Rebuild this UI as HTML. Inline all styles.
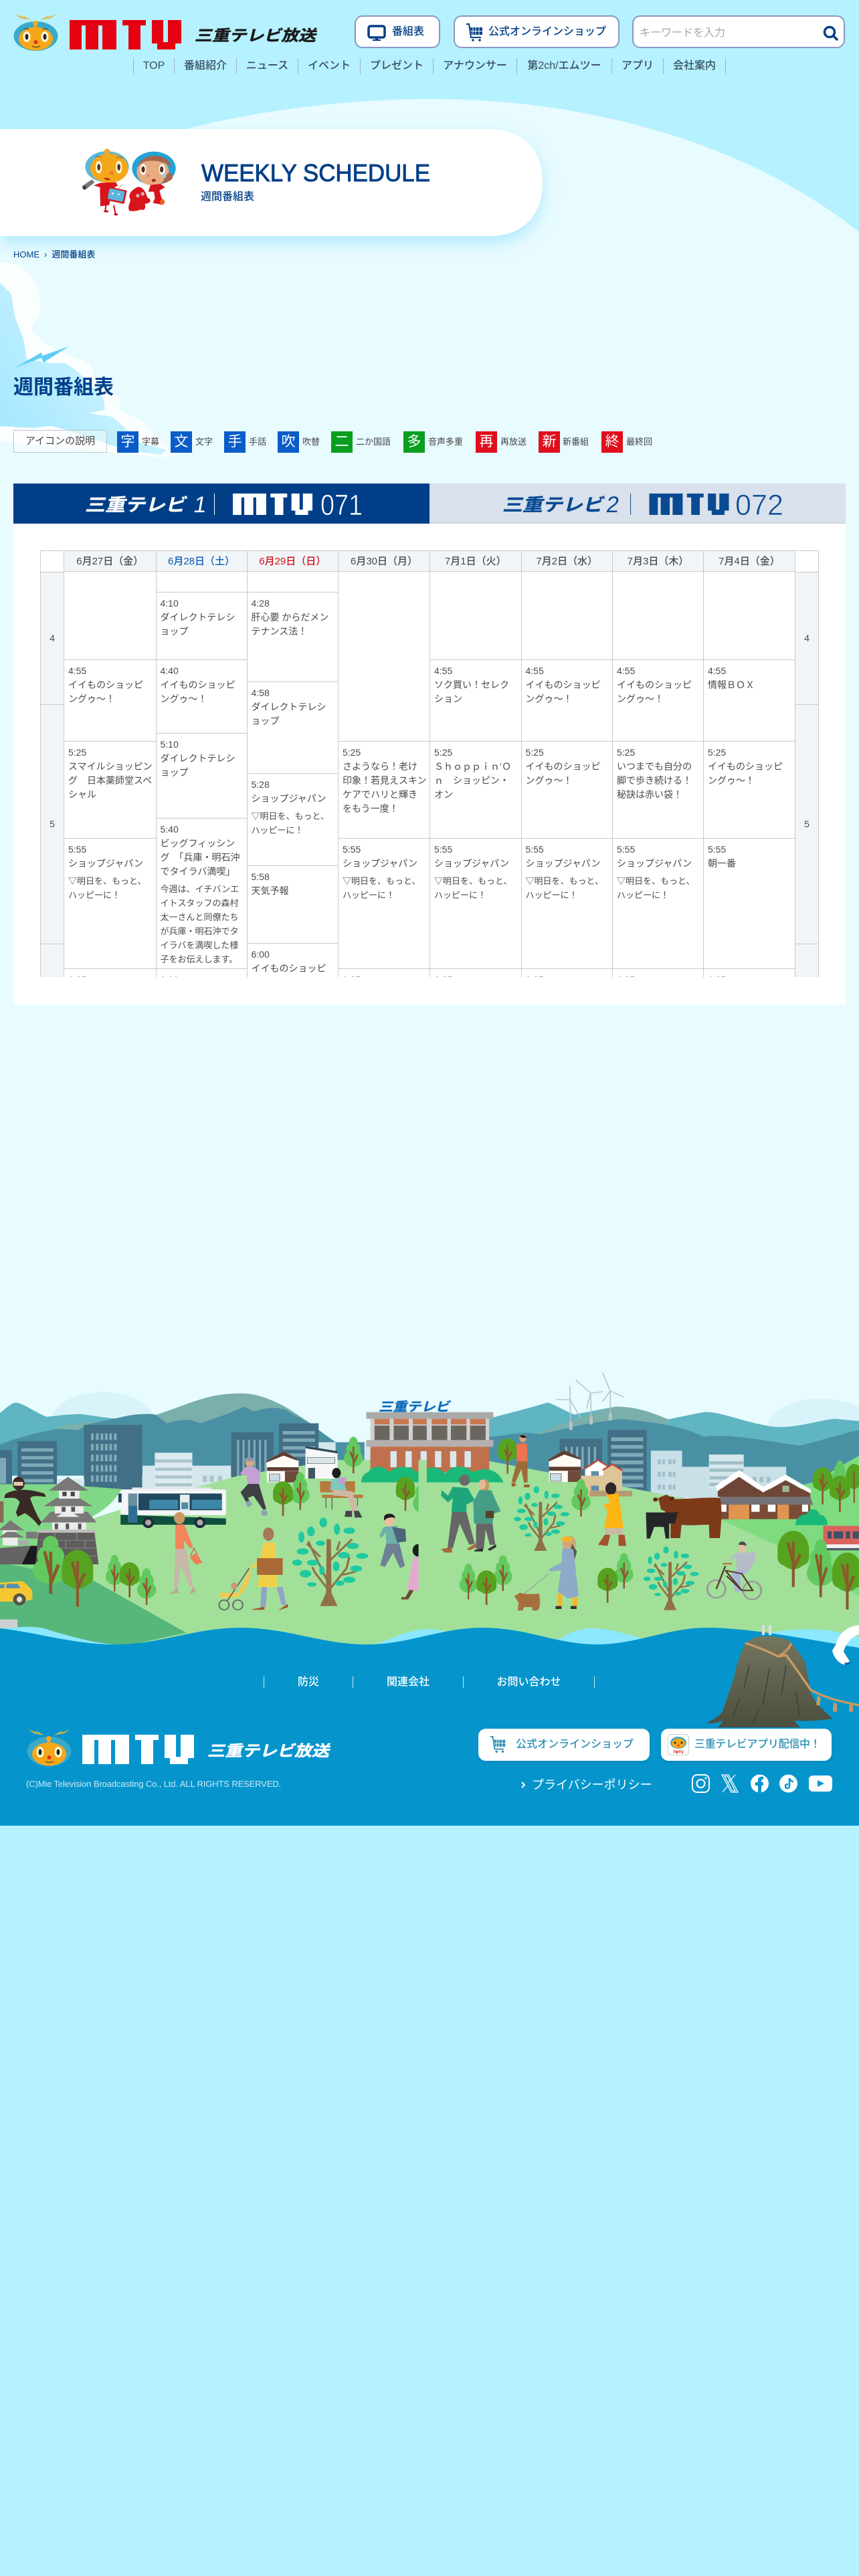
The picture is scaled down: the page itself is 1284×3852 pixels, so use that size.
<!DOCTYPE html>
<html lang="ja"><head><meta charset="utf-8"><title>週間番組表 | 三重テレビ放送</title>
<style>
html,body{margin:0;padding:0}
body{width:1284px;height:3852px;position:relative;overflow:hidden;background:#b5f1ff;font-family:"Liberation Sans","Noto Sans CJK JP",sans-serif;color:#444}
svg text{font-family:"Liberation Sans","Noto Sans CJK JP",sans-serif}
#bg{position:absolute;left:0;top:0}
.t{position:absolute;white-space:nowrap}
.btn{position:absolute;box-sizing:border-box;background:#fff;border:2px solid #8996c2;border-radius:12px;color:#003f85;font-size:16px;line-height:45px;font-weight:500}
.nav{position:absolute;top:87px;height:24px;line-height:24px;text-align:center;font-size:16px;font-weight:500;color:#3a4e5e;border-left:1px solid #9fb3bf;box-sizing:border-box}
.ic{position:absolute;top:645px;width:32px;height:32px;line-height:32px;text-align:center;color:#fff;font-size:21px}
.lb{position:absolute;top:650px;font-size:13px;line-height:22px;color:#444;white-space:nowrap}
.bl{background:#0a5dc8}.gr{background:#0a9e1f}.rd{background:#e00f1d}
#tb{position:absolute;left:60px;top:823px;width:1164px;height:638px;overflow:hidden;background:#fff;font-size:14px;line-height:21px;color:#4a4a4a}
.col{position:absolute;top:0;height:800px;box-sizing:border-box;border-left:1px solid #c6c9cc}
.h{box-sizing:border-box;height:32px;line-height:31px;text-align:center;background:#f1f5f8;font-size:15px;font-weight:500;border-top:1px solid #c6c9cc;border-bottom:1px solid #c6c9cc;white-space:nowrap}
.c{box-sizing:border-box;padding:6px 0 0 6px;border-bottom:1px solid #c6c9cc;white-space:nowrap;overflow:hidden}
.c p{margin:5px 0 0;font-size:13px}
.hr{box-sizing:border-box;background:#f1f5f8;border-bottom:1px solid #c6c9cc;text-align:center;font-size:14px;display:flex;align-items:center;justify-content:center}
.fb{position:absolute;top:2585px;height:48px;background:#fff;border-radius:11px;color:#2a8fb6;font-size:16px;font-weight:500;line-height:48px;box-shadow:0 2px 4px rgba(0,60,100,.15)}
.fn{position:absolute;top:2507px;height:17px;line-height:17px;color:#fff;font-size:16px;font-weight:500;text-align:center;border-left:1px solid #cfeaf5;box-sizing:border-box}
</style></head><body>
<svg id="bg" width="1284" height="3852" viewBox="0 0 1284 3852" xmlns="http://www.w3.org/2000/svg">
<defs>
<linearGradient id="cl" x1="0" x2="1" y1=".8" y2=".15"><stop offset="0" stop-color="#a6e8ff"/><stop offset=".55" stop-color="#c6f1ff"/><stop offset="1" stop-color="#e2f9ff"/></linearGradient>
<linearGradient id="rk" x1="0" x2="0" y1="0" y2="1"><stop offset="0" stop-color="#74765f"/><stop offset="1" stop-color="#4c4e3d"/></linearGradient>
<filter id="sh" x="-10%" y="-20%" width="120%" height="150%"><feDropShadow dx="0" dy="10" stdDeviation="12" flood-color="#7fdcf5" flood-opacity=".55"/></filter>
<style>.a{fill:#62c95e}.d{fill:#56a31f}.tr{stroke:#8a5a2b;fill:none;stroke-width:9}.l{fill:#20c9a0}.b{fill:#19b97a}</style>
</defs>
<path d="M0 300C150 210 400 148 647 148C880 148 1120 215 1284 347L1284 2500L0 2500Z" fill="#e8fbff"/>
<!-- cloud -->
<path d="M0 393C15 393 25 395 33 400C47 412 55 425 57 437C60 450 60 460 58 470L47 493L67 513L100 530L133 543L143 567L177 593L180 613L213 630L250 670L267 680L240 684L0 660Z" fill="#fff" opacity=".8"/>
<path d="M0 422L17 440L22 473L35 507L40 537L77 543L97 543L113 553L137 577L155 597L157 613L133 618L167 623L187 640L203 660L250 673L240 680L187 673L100 643L77 637L47 640L0 637Z" fill="url(#cl)"/>
<path d="M22 550L62 527L63 532L103 518L65 542L62 535Z" fill="#5dcff5"/>
<!-- hero pill -->
<path d="M0 193H731C781 193 811 223 811 273C811 323 781 353 731 353H0Z" fill="#fff" filter="url(#sh)"/>
<!-- hero mascots -->
<g transform="translate(100,200) scale(.3333)">
<ellipse cx="180" cy="148" rx="98" ry="70" fill="#5fb8d8"/><circle cx="180" cy="80" r="13" fill="#f5a71a"/><rect x="174" y="85" width="12" height="15" fill="#f5a71a"/>
<ellipse cx="190" cy="155" rx="85" ry="65" fill="#f5a71a"/><ellipse cx="143" cy="150" rx="14" ry="28" fill="#fff8d8"/><ellipse cx="233" cy="150" rx="14" ry="28" fill="#fff8d8"/><ellipse cx="143" cy="150" rx="7" ry="15" fill="#5a3020"/><ellipse cx="233" cy="150" rx="7" ry="15" fill="#5a3020"/>
<circle cx="200" cy="175" r="9" fill="#ee7755"/><path d="M165 198Q182 195 195 205Q180 215 165 198Z" fill="#b8281a"/>
<path d="M127 105Q140 95 155 108M220 108Q235 100 250 110" stroke="#444" stroke-width="2" fill="none"/>
<path d="M120 232L150 220L220 218L228 232L200 250L190 320L150 325L148 240Z" fill="#d8141c"/>
<path d="M68 235L112 205L125 218L82 252Z" fill="#777"/><circle cx="78" cy="242" r="8" fill="#333"/>
<path d="M178 290L172 345M210 320L218 360" stroke="#c81018" stroke-width="6" fill="none"/><ellipse cx="176" cy="348" rx="11" ry="5" fill="#c81018"/><ellipse cx="220" cy="362" rx="9" ry="5" fill="#c81018"/>
<rect x="180" y="245" width="84" height="62" rx="5" transform="rotate(12 222 276)" fill="#d8141c"/><rect x="186" y="251" width="70" height="48" rx="5" transform="rotate(12 222 276)" fill="#5cb6e0"/><circle cx="206" cy="268" r="4" fill="#fff"/><circle cx="232" cy="272" r="4" fill="#fff"/>
<path d="M232 245L248 228" stroke="#c8a030" stroke-width="3"/>
<ellipse cx="390" cy="155" rx="98" ry="75" fill="#22a3d8"/><ellipse cx="385" cy="170" rx="72" ry="62" fill="#e6ad80"/><path d="M318 150C325 110 370 95 410 100C450 105 465 130 470 150C440 125 390 115 350 125C335 130 325 140 318 150Z" fill="#a5674a"/>
<path d="M450 180C470 165 480 190 470 205C455 215 440 225 425 222Z" fill="#a5674a"/><ellipse cx="342" cy="160" rx="14" ry="24" fill="#fff"/><ellipse cx="427" cy="160" rx="14" ry="24" fill="#fff"/><ellipse cx="342" cy="160" rx="8" ry="14" fill="#5a3020"/><ellipse cx="425" cy="160" rx="8" ry="14" fill="#5a3020"/>
<circle cx="365" cy="188" r="7" fill="#e08a70"/><path d="M380 205Q395 200 400 208Q395 220 382 215Z" fill="#b8281a"/><ellipse cx="437" cy="188" rx="9" ry="10" fill="#9cc8d8"/>
<path d="M375 230L420 225L440 240L415 255L425 290L440 305L425 318L385 310L395 290L390 260L365 260Z" fill="#d8141c"/><ellipse cx="428" cy="306" rx="10" ry="13" fill="#e8641c"/>
<path d="M315 240C335 232 355 260 360 285C385 300 375 310 350 315C355 340 345 345 330 340C320 345 295 350 280 345C270 325 285 310 285 295C270 270 295 250 315 240Z" fill="#d8141c"/><circle cx="318" cy="278" r="7" fill="#fff"/><circle cx="340" cy="270" r="7" fill="#fff"/><circle cx="318" cy="278" r="3" fill="#333"/><circle cx="340" cy="270" r="3" fill="#333"/>
</g>
<!-- panel + tabs -->
<rect x="20" y="783" width="1244" height="719.5" fill="#fff"/>
<rect x="20" y="723" width="622" height="60" fill="#003f88"/>
<rect x="642" y="723" width="622" height="60" fill="#d8e1ec"/><rect x="642" y="781.5" width="622" height="1.5" fill="#c9d2dc"/>
<text transform="translate(127,764) skewX(-14) scale(1,.88)" font-size="30" font-weight="700" fill="#fff" stroke="#fff" stroke-width=".5" textLength="150" lengthAdjust="spacingAndGlyphs">三重テレビ</text>
<text transform="translate(288,766) skewX(-10)" font-size="34" font-weight="400" fill="#fff">1</text>
<rect x="320" y="738" width="1" height="32" fill="#fff"/>
<g fill="#fff" transform="translate(348,738) scale(.7126,.7273)"><rect width="70" height="8"/><rect width="18" height="44"/><rect x="24" width="19" height="44"/><rect x="49" width="21" height="44"/><rect x="79" width="35" height="8"/><rect x="88" width="18" height="44"/><rect x="123" width="17" height="35"/><rect x="147" width="20" height="35"/><rect x="123" y="33" width="44" height="2"/><rect x="131" y="33" width="27" height="11"/></g>
<text x="479" y="770" font-size="44" fill="#fff" textLength="63" lengthAdjust="spacingAndGlyphs" stroke="#003f88" stroke-width=".8">071</text>
<text transform="translate(751,764) skewX(-14) scale(1,.88)" font-size="30" font-weight="700" fill="#0a4a92" stroke="#0a4a92" stroke-width=".5" textLength="150" lengthAdjust="spacingAndGlyphs">三重テレビ</text>
<text transform="translate(905,766) skewX(-8)" font-size="34" fill="#0a4a92">2</text>
<rect x="942" y="738" width="1" height="32" fill="#0a4a92"/>
<g fill="#0a4a92" transform="translate(970.5,738) scale(.7126,.7273)"><rect width="70" height="8"/><rect width="18" height="44"/><rect x="24" width="19" height="44"/><rect x="49" width="21" height="44"/><rect x="79" width="35" height="8"/><rect x="88" width="18" height="44"/><rect x="123" width="17" height="35"/><rect x="147" width="20" height="35"/><rect x="123" y="33" width="44" height="2"/><rect x="131" y="33" width="27" height="11"/></g>
<text x="1099" y="770" font-size="44" fill="#0a4a92" textLength="72" lengthAdjust="spacingAndGlyphs" stroke="#d8e1ec" stroke-width=".8">072</text>
<!-- header logo -->
<g id="mh">
<path d="M22 21L36 26L34 23L46 30L32 27L34 29Z M85 21L71 26L73 23L60 30L74 27L72 29Z" fill="#e2b53c"/>
<ellipse cx="53.5" cy="54" rx="33" ry="22" fill="#3aa9c9"/><circle cx="53" cy="35" r="4" fill="#f5a71a"/><rect x="51" y="36" width="4" height="5" fill="#f5a71a"/>
<ellipse cx="53.5" cy="58" rx="25.5" ry="17.5" fill="#f5a71a"/><ellipse cx="40" cy="55" rx="5.5" ry="8" fill="#fff8d8"/><ellipse cx="67" cy="55" rx="5.5" ry="8" fill="#fff8d8"/><ellipse cx="40" cy="55" rx="2.5" ry="4.5" fill="#222"/><ellipse cx="67" cy="55" rx="2.5" ry="4.5" fill="#222"/>
<circle cx="53.5" cy="63" r="3" fill="#e3301c"/><path d="M48 69Q53.500 72 60 69" stroke="#333" stroke-width="1" fill="none"/><path d="M36 44Q40 41 43 44M64 44Q67 41 71 44" stroke="#333" stroke-width="1" fill="none"/>
</g>
<g fill="#e50012" transform="translate(104,30)"><rect width="70" height="8"/><rect width="18" height="44"/><rect x="24" width="19" height="44"/><rect x="49" width="21" height="44"/><rect x="79" width="35" height="8"/><rect x="88" width="18" height="44"/><rect x="123" width="17" height="35"/><rect x="147" width="20" height="35"/><rect x="123" y="33" width="44" height="2"/><rect x="131" y="33" width="27" height="11"/></g>
<text transform="translate(291,61) skewX(-14) scale(1,.88)" font-size="26" font-weight="700" fill="#1b1b1b" stroke="#1b1b1b" stroke-width=".6" textLength="181" lengthAdjust="spacingAndGlyphs">三重テレビ放送</text>

<!-- ILLUSTRATION LEFT -->
<g transform="translate(0,2020) scale(.4095,.3333)">
<ellipse cx="375" cy="320" rx="190" ry="135" fill="#d8f4fa"/>
<path d="M0 278C20 262 40 232 58 232C85 235 120 270 170 296C210 290 250 285 290 283C340 290 380 300 430 305L600 300V500H0Z" fill="#5fb5c2"/>
<path d="M560 290C620 270 680 235 740 215C790 195 850 188 905 192C960 200 1020 235 1060 265L1140 330L1000 400H600Z" fill="#7aafab"/>
<path d="M0 420C70 385 200 345 280 340C340 325 390 310 440 298C480 285 530 280 565 285L610 325C650 310 690 300 730 325C790 300 840 280 890 250L925 272C970 255 1000 250 1040 263L1130 325L1225 410V560H0Z" fill="#4a90a4"/>
<path d="M205 350C240 325 300 320 340 318L285 355Z" fill="#7aafab"/>
<rect x="1160" y="410" width="410" height="180" fill="#d3e7ec"/><path d="M1225 410H1330V500H1225Z" fill="#4a90a4"/>
<g fill="#416f86"><rect y="445" width="44" height="155"/><rect x="64" y="405" width="144" height="195"/><rect x="306" y="332" width="213" height="290"/><rect x="844" y="365" width="154" height="210"/><rect x="1018" y="325" width="145" height="260"/></g>
<g fill="#7fa9b8"><rect x="78" y="437" width="117" height="15"/><rect x="78" y="472" width="117" height="15"/><rect x="78" y="505" width="117" height="15"/><rect x="78" y="540" width="117" height="15"/><rect x="78" y="575" width="117" height="15"/>
<rect x="1032" y="360" width="118" height="15"/><rect x="1032" y="393" width="118" height="15"/><rect x="1032" y="428" width="118" height="15"/><rect x="1032" y="460" width="118" height="15"/>
<path d="M332 370h10v30h-10zM350 370h10v30h-10zM367 370h10v30h-10zM383 370h10v30h-10zM399 370h10v30h-10zM416 370h10v30h-10zM332 417h10v30h-10zM350 417h10v30h-10zM367 417h10v30h-10zM383 417h10v30h-10zM399 417h10v30h-10zM416 417h10v30h-10zM332 465h10v30h-10zM350 465h10v30h-10zM367 465h10v30h-10zM383 465h10v30h-10zM399 465h10v30h-10zM416 465h10v30h-10zM332 512h10v30h-10zM350 512h10v30h-10zM367 512h10v30h-10zM383 512h10v30h-10zM399 512h10v30h-10zM416 512h10v30h-10zM332 558h10v30h-10zM350 558h10v30h-10zM367 558h10v30h-10zM383 558h10v30h-10zM399 558h10v30h-10zM416 558h10v30h-10z"/>
<path d="M865 400h8v160h-8zM885 400h8v160h-8zM905 400h8v160h-8zM925 400h8v160h-8zM945 400h8v160h-8zM965 400h8v160h-8z"/><rect y="480" width="22" height="115"/></g>
<rect x="520" y="515" width="323" height="110" fill="#d3e7ec"/><rect x="565" y="457" width="137" height="170" fill="#dcecf0"/>
<g fill="#aac6cc"><rect x="567" y="487" width="133" height="14"/><rect x="567" y="524" width="133" height="14"/><rect x="567" y="559" width="133" height="14"/><rect x="567" y="594" width="133" height="14"/><rect x="740" y="560" width="16" height="28"/><rect x="765" y="560" width="16" height="28"/><rect x="795" y="560" width="16" height="28"/></g>
<rect x="208" y="575" width="100" height="30" fill="#d3e7ec"/>
<!-- ground -->
<path d="M0 598H205L445 620C410 690 370 720 330 750L340 1030L0 950Z" fill="#80d887"/>
<path d="M300 770C500 680 700 620 870 560L1230 490L1600 490V1400H0V950L340 1030Z" fill="#a2e09a"/>
<path d="M0 950L340 1030L680 1265L430 1330L0 1260Z" fill="#57b67a"/>
<rect y="1205" width="64" height="50" fill="#ccd0d0"/>
<!-- castle -->
<path d="M0 885L95 875H135V958H0Z" fill="#646262"/><path d="M80 958L112 875H135V958Z" fill="#1a1a1a"/>
<path d="M140 815L345 815L360 958L130 958Z" fill="#5f5c5c"/><path d="M145 850H350M140 885H355M135 920H358M200 815V850M280 815V850M170 850V885M240 850V885M310 850V885M200 885V920M280 885V920M170 920V958M250 920V958M320 920V958" stroke="#8a8787" stroke-width="3"/>
<rect x="138" y="802" width="208" height="14" fill="#bbb"/>
<rect x="190" y="760" width="125" height="42" fill="#ececec"/><rect x="200" y="775" width="12" height="25" fill="#555"/><rect x="240" y="775" width="12" height="25" fill="#555"/><rect x="285" y="775" width="12" height="25" fill="#555"/>
<path d="M148 770L185 722L320 722L353 770Z" fill="#7b7878"/><path d="M205 745L247 715L290 745Z" fill="#ececec"/>
<rect x="200" y="695" width="105" height="35" fill="#ececec"/><rect x="225" y="700" width="14" height="22" fill="#555"/><rect x="260" y="700" width="14" height="22" fill="#555"/>
<path d="M160 697L205 660L290 660L338 697Z" fill="#7b7878"/><rect x="215" y="625" width="75" height="38" fill="#ececec"/><rect x="228" y="632" width="15" height="20" fill="#444"/><rect x="258" y="632" width="15" height="20" fill="#444"/>
<path d="M178 627L248 565L322 627Z" fill="#7b7878"/>
<path d="M-5 805L38 760L88 805Z" fill="#7b7878"/><rect x="10" y="805" width="50" height="25" fill="#ececec"/><path d="M-5 838L25 812L55 812L88 838Z" fill="#7b7878"/><rect x="10" y="838" width="55" height="35" fill="#ececec"/><rect x="95" y="812" width="42" height="30" fill="#7b7878"/><rect x="65" y="850" width="40" height="20" fill="#aaa"/>
<rect x="0" y="675" width="13" height="95" fill="#8a6a50"/>
<!-- ninja -->
<ellipse cx="68" cy="595" rx="22" ry="30" fill="#3a2a26"/><rect x="50" y="588" width="34" height="17" fill="#e6c9ae"/>
<path d="M20 642C50 620 100 615 162 640L168 655C130 650 115 650 110 662C125 710 135 740 152 770L142 786C120 750 100 735 90 728L65 745L58 725L72 680C60 650 40 662 15 660Z" fill="#3a2a26"/>
<!-- bus -->
<rect x="482" y="613" width="290" height="12" fill="#e4e8ea"/><rect x="440" y="622" width="385" height="115" rx="8" fill="#f4f7f8"/><path d="M440 735L825 752V780H440Z" fill="#0f5140"/>
<rect x="505" y="640" width="305" height="75" fill="#21485e"/><rect x="545" y="668" width="105" height="42" fill="#3d87a8"/><rect x="700" y="668" width="110" height="42" fill="#3d87a8"/>
<rect x="657" y="645" width="35" height="92" fill="#e9eef0"/><rect x="662" y="680" width="25" height="30" fill="#4c8fa8"/>
<rect x="468" y="640" width="33" height="130" fill="#6b8ea0"/><rect x="470" y="695" width="31" height="75" fill="#2f6f96"/><rect x="432" y="640" width="12" height="40" fill="#21485e"/>
<ellipse cx="541" cy="770" rx="21" ry="25" fill="#1f2d3a"/><ellipse cx="541" cy="770" rx="11" ry="13" fill="#aaa"/><ellipse cx="730" cy="770" rx="21" ry="25" fill="#1f2d3a"/><ellipse cx="730" cy="770" rx="11" ry="13" fill="#aaa"/>
<!-- runner -->
<ellipse cx="912" cy="500" rx="16" ry="22" fill="#d8a980"/><path d="M890 487Q910 470 928 485L925 495H895Z" fill="#8d9baa"/>
<path d="M897 520C920 515 945 525 950 555L945 600H905L900 560L875 552Z" fill="#c4a0d4"/><path d="M905 597H945L972 710L960 712L925 650L905 660L920 690L905 692L878 635Z" fill="#3f4145"/><ellipse cx="908" cy="686" rx="10" ry="14" fill="#8fa3b0"/><ellipse cx="965" cy="727" rx="12" ry="14" fill="#8fa3b0"/>
<!-- houses -->
<path d="M972 495L1035 450L1090 490V590H975Z" fill="#fffdf6"/><path d="M968 498L1035 450L1092 490L1085 492L1035 470L975 500Z" fill="#5f3d31"/><rect x="975" y="522" width="115" height="17" fill="#5f3d31"/><rect x="1040" y="540" width="50" height="50" fill="#6f4a3a"/><rect x="983" y="552" width="38" height="33" fill="#c8dde4" stroke="#555" stroke-width="2"/>
<path d="M1115 432L1232 460V573H1115Z" fill="#f6f8f8"/><path d="M1115 427L1232 450V460L1115 437Z" fill="#2f4858"/><rect x="1125" y="525" width="25" height="48" fill="#3f5560"/><rect x="1122" y="478" width="100" height="28" fill="#d8e4e8" stroke="#666" stroke-width="2"/>
<!-- bench woman -->
<path d="M1168 585H1296V635H1168Z M1175 645H1325V660H1175Z" fill="#b87a3e"/><path d="M1190 660V705M1212 660V712M1305 660V695" stroke="#555" stroke-width="3"/>
<ellipse cx="1228" cy="548" rx="16" ry="23" fill="#1d1d1d"/><path d="M1210 575L1250 570L1265 625H1205Z" fill="#7ec8c0"/><path d="M1235 570L1265 565L1260 595L1240 598Z" fill="#c49ad0"/><path d="M1215 620L1285 630L1310 720L1285 725L1270 655L1215 648Z" fill="#cdb8a4"/><path d="M1262 718H1285V745H1258ZM1292 718H1310L1322 748H1295Z" fill="#444"/>
<!-- station -->
<rect x="1352" y="300" width="220" height="115" fill="#fff"/><rect x="1352" y="305" width="220" height="110" fill="#d0d0d0"/><rect x="1337" y="275" width="240" height="30" fill="#a9a9a9"/>
<rect x="1367" y="305" width="55" height="25" fill="#c8784f"/><rect x="1437" y="305" width="55" height="25" fill="#c8784f"/><rect x="1507" y="305" width="55" height="25" fill="#c8784f"/>
<rect x="1367" y="335" width="55" height="68" fill="#6c6660"/><rect x="1437" y="335" width="55" height="68" fill="#6c6660"/><rect x="1507" y="335" width="61" height="68" fill="#6c6660"/>
<rect x="1337" y="400" width="240" height="30" fill="#b4b0ae"/><rect x="1352" y="430" width="220" height="115" fill="#c0704c"/>
<rect x="1425" y="450" width="23" height="72" fill="#d8e8ec"/><rect x="1480" y="450" width="23" height="72" fill="#d8e8ec"/><rect x="1535" y="450" width="23" height="72" fill="#d8e8ec"/>
<path d="M1318 590C1320 560 1335 545 1345 545C1350 520 1400 505 1420 545C1440 515 1500 510 1520 545C1540 520 1570 520 1580 590Z" class="b"/>
<!-- trees -->
<g transform="translate(185,830) scale(1.3,2.15)"><ellipse class="a" cy="18" rx="22" ry="18"/><ellipse class="a" cy="42" rx="38" ry="24"/><ellipse class="a" cy="72" rx="50" ry="28"/><path class="tr" d="M0 121V33M0 85L-17 32M0 100L22 60"/></g>
<g transform="translate(283,893) scale(1.15,1.75)"><rect class="d" x="-50" y="40" width="100" height="50" rx="22"/><ellipse class="d" cy="50" rx="50" ry="50"/><path class="tr" d="M0 146V28M0 85L-17 30M0 100L22 60"/></g>
<g transform="translate(418,915) scale(.65,1.35)"><ellipse class="a" cy="18" rx="22" ry="18"/><ellipse class="a" cy="42" rx="38" ry="24"/><ellipse class="a" cy="72" rx="50" ry="28"/><path class="tr" d="M0 122V33M0 75L-17 50M0 90L22 60"/></g>
<g transform="translate(473,948) scale(.73,1.07)"><rect class="d" x="-50" y="40" width="100" height="50" rx="22"/><ellipse class="d" cy="50" rx="50" ry="50"/><path class="tr" d="M0 148V28M0 75L-17 50M0 90L22 60"/></g>
<g transform="translate(535,975) scale(.7,1.35)"><ellipse class="a" cy="18" rx="22" ry="18"/><ellipse class="a" cy="42" rx="38" ry="24"/><ellipse class="a" cy="72" rx="50" ry="28"/><path class="tr" d="M0 122V33M0 75L-17 50M0 90L22 60"/></g>
<g transform="translate(1096,545) scale(.68,1.4)"><ellipse class="a" cy="18" rx="22" ry="18"/><ellipse class="a" cy="42" rx="38" ry="24"/><ellipse class="a" cy="72" rx="50" ry="28"/><path class="tr" d="M0 120V33M0 75L-17 50M0 90L22 60"/></g>
<g transform="translate(1033,585) scale(.73,1.05)"><rect class="d" x="-50" y="40" width="100" height="50" rx="22"/><ellipse class="d" cy="50" rx="50" ry="50"/><path class="tr" d="M0 148V28M0 75L-17 50M0 90L22 60"/></g>
<g transform="translate(1290,385) scale(.7,1.35)"><ellipse class="a" cy="18" rx="22" ry="18"/><ellipse class="a" cy="42" rx="38" ry="24"/><ellipse class="a" cy="72" rx="50" ry="28"/><path class="tr" d="M0 122V33M0 75L-17 50M0 90L22 60"/></g>
<g transform="translate(1480,565) scale(.7,1.05)"><rect class="d" x="-50" y="40" width="100" height="50" rx="22"/><ellipse class="d" cy="50" rx="50" ry="50"/><path class="tr" d="M0 146V28M0 75L-17 50M0 90L22 60"/></g>
<g transform="translate(1547,565) scale(.8,1.65)"><ellipse class="a" cy="18" rx="22" ry="18"/><ellipse class="a" cy="42" rx="38" ry="24"/><ellipse class="a" cy="72" rx="50" ry="28"/><path class="tr" d="M0 121V33M0 75L-17 50M0 90L22 60"/></g>
<!-- teal tree -->
<g transform="translate(1200,745)"><path d="M-8 100L8 100L10 340L32 400H-32L-10 340Z" fill="#8f7048"/><path d="M0 330L-50 250L-60 225M0 300L-75 110M-30 180L-80 120M0 200L85 100M30 150L40 110M0 330L65 230L75 180M50 260L100 245" stroke="#8f7048" stroke-width="8" fill="none"/>
<g class="l"><ellipse cx="-20" cy="25" rx="14" ry="22"/><ellipse cx="-65" cy="65" rx="14" ry="22"/><ellipse cx="-100" cy="90" rx="11" ry="25"/><ellipse cx="30" cy="55" rx="11" ry="25"/><ellipse cx="75" cy="62" rx="21" ry="14"/><ellipse cx="-30" cy="118" rx="17" ry="12"/><ellipse cx="88" cy="130" rx="22" ry="14"/><ellipse cx="-95" cy="155" rx="22" ry="14"/><ellipse cx="-115" cy="205" rx="18" ry="14"/><ellipse cx="-58" cy="205" rx="22" ry="13"/><ellipse cx="55" cy="172" rx="22" ry="14"/><ellipse cx="122" cy="175" rx="22" ry="13"/><ellipse cx="27" cy="222" rx="12" ry="22"/><ellipse cx="100" cy="232" rx="22" ry="14"/><ellipse cx="-85" cy="255" rx="21" ry="17"/><ellipse cx="75" cy="282" rx="22" ry="14"/><ellipse cx="-62" cy="303" rx="17" ry="10"/><ellipse cx="40" cy="297" rx="17" ry="12"/><ellipse cx="-25" cy="240" rx="10" ry="20"/></g></g>
<!-- woman orange -->
<ellipse cx="655" cy="750" rx="20" ry="27" fill="#c99a66"/><path d="M640 780L672 778L705 880L692 885L672 850V888H640Z" fill="#f4845a"/><path d="M640 888H680L705 1060H692L660 960L648 1070H635Z" fill="#c8b8a8"/><path d="M618 1092L648 1062L652 1085ZM690 1092L705 1058L715 1080Z" fill="#b8a898"/><path d="M692 925L718 905L738 950L715 960Z" fill="#ee7e58"/><path d="M695 920L708 885L718 908" stroke="#c0603c" stroke-width="3" fill="none"/>
<!-- stroller woman -->
<ellipse cx="980" cy="822" rx="20" ry="30" fill="#a67a58"/><path d="M960 860L1005 860L1012 1060H940ZM945 940L965 880L965 960L905 975Z" fill="#f0d04a"/><rect x="938" y="930" width="94" height="75" fill="#a96a38"/><path d="M955 1060H975L970 1150H950ZM1010 1060H1032L1045 1140H1028Z" fill="#8fa4c8"/><path d="M918 1160L965 1148V1162H918ZM1015 1165L1050 1135L1052 1150Z" fill="#a05a28"/>
<path d="M910 980L870 1085H802V1108H860C895 1090 915 1030 915 980Z" fill="#eecb50"/><path d="M910 975L830 1120" stroke="#555" stroke-width="4"/><ellipse cx="818" cy="1140" rx="18" ry="22" fill="none" stroke="#666" stroke-width="5"/><ellipse cx="868" cy="1140" rx="18" ry="22" fill="none" stroke="#666" stroke-width="5"/><ellipse cx="855" cy="1055" rx="12" ry="16" fill="#c99a72"/>
<!-- kid backpack -->
<ellipse cx="1422" cy="760" rx="20" ry="28" fill="#e6c09e"/><path d="M1402 745C1405 725 1440 725 1443 750C1430 745 1415 745 1402 762Z" fill="#1d1d1d"/><path d="M1400 790L1450 785L1458 865H1410L1408 815L1392 840L1385 830Z" fill="#6fb0a8"/><path d="M1432 790L1480 800L1482 855L1450 860Z" fill="#4a6478"/><path d="M1410 865H1458L1478 965L1460 975L1435 905L1405 970L1388 962Z" fill="#6e7f96"/>
<!-- girl pink -->
<ellipse cx="1526" cy="895" rx="20" ry="28" fill="#1d1d1d"/><path d="M1510 925L1545 925L1568 1075H1485Z" fill="#e6a8d0"/><path d="M1535 925L1570 925L1570 1010L1542 1005Z" fill="#94a8b8"/><path d="M1495 1072L1480 1105H1465V1115H1490L1510 1075ZM1545 1072L1550 1120H1565V1105L1560 1072Z" fill="#6a4a30"/>
<!-- taxi -->
<path d="M0 1040L80 1033C95 1040 105 1060 118 1075V1115L85 1125H0Z" fill="#f5c832"/><path d="M0 1048H18L15 1065H0ZM25 1045H65L75 1065H22Z" fill="#5890b0"/><ellipse cx="71" cy="1115" rx="23" ry="27" fill="#554"/><ellipse cx="71" cy="1115" rx="10" ry="13" fill="#ddd"/>
</g>

<!-- ILLUSTRATION RIGHT -->
<g transform="translate(642,2020) scale(.4095,.3333)">
<ellipse cx="1430" cy="350" rx="200" ry="135" fill="#d8f4fa"/>
<path d="M215 305C270 285 340 265 430 232C460 240 500 275 530 285L680 250L860 310L1000 275C1060 270 1130 315 1250 340C1340 350 1420 310 1480 305L1568 315V520H215Z" fill="#5fb5c2"/>
<path d="M365 390C440 340 560 290 680 250C760 250 820 280 880 312L800 400H400Z" fill="#7aafab"/>
<path d="M215 385C270 385 340 355 400 375L560 330L700 305C790 320 900 325 1000 385C1100 370 1200 400 1350 425C1440 400 1510 370 1568 355V650L1400 660H215Z" fill="#4a90a4"/>
<!-- turbines -->
<g stroke="#b6c4c8" stroke-width="4" fill="none"><path d="M516 350L513 220M513 220L463 217M513 220L552 300M513 220L513 157"/><path d="M590 325L588 190M588 190L534 130M588 190L634 183M588 190L573 260"/><path d="M660 310L660 180M660 180L632 97M660 180L708 207M660 180L632 228"/></g>
<rect x="510" y="320" width="12" height="35" fill="#b6c4c8"/><rect x="584" y="295" width="12" height="35" fill="#b6c4c8"/><rect x="654" y="280" width="12" height="32" fill="#b6c4c8"/>
<rect x="475" y="395" width="155" height="210" fill="#416f86"/><path d="M495 430h8v100h-8zM515 430h8v100h-8zM535 430h8v100h-8zM555 430h8v100h-8zM578 430h8v100h-8zM600 430h8v100h-8z" fill="#7fa9b8"/>
<rect x="650" y="355" width="143" height="280" fill="#416f86"/><g fill="#7fa9b8"><rect x="663" y="388" width="117" height="17"/><rect x="663" y="422" width="117" height="17"/><rect x="663" y="458" width="117" height="17"/><rect x="663" y="492" width="117" height="17"/><rect x="663" y="527" width="117" height="17"/><rect x="663" y="560" width="117" height="17"/><rect x="663" y="595" width="117" height="17"/></g>
<rect x="808" y="448" width="114" height="210" fill="#c9e0e8"/><rect x="922" y="520" width="380" height="140" fill="#c9e0e8"/><rect x="1020" y="465" width="127" height="150" fill="#d3e7ec"/>
<g fill="#a3c0c9"><rect x="1022" y="495" width="123" height="15"/><rect x="1022" y="528" width="123" height="15"/><rect x="1022" y="562" width="123" height="15"/><rect x="1022" y="592" width="123" height="15"/><path d="M833 487h12v22h-12zM850 487h10v22h-10zM872 487h12v22h-12zM888 487h10v22h-10zM833 543h12v22h-12zM850 543h10v22h-10zM872 543h12v22h-12zM888 543h10v22h-10zM833 600h12v22h-12zM850 600h10v22h-10zM872 600h12v22h-12zM888 600h10v22h-10zM1180 565h14v24h-14zM1205 565h14v24h-14zM1230 565h14v24h-14z"/></g>
<!-- ground right -->
<path d="M-40 490L220 495L795 630L1050 690L1100 760H1568V1400H-40Z" fill="#a2e09a"/>
<path d="M1060 755L1300 620L1400 590L1568 470V1100L1280 880Z" fill="#7fdb80"/>
<!-- station right part -->
<rect x="-10" y="275" width="243" height="30" fill="#a9a9a9"/><rect x="-10" y="305" width="228" height="110" fill="#d0d0d0"/>
<rect x="8" y="305" width="57" height="25" fill="#c8784f"/><rect x="78" y="305" width="57" height="25" fill="#c8784f"/><rect x="148" y="305" width="57" height="25" fill="#c8784f"/>
<rect x="8" y="335" width="57" height="68" fill="#6c6660"/><rect x="78" y="335" width="57" height="68" fill="#6c6660"/><rect x="148" y="335" width="57" height="68" fill="#6c6660"/>
<rect x="-10" y="400" width="243" height="30" fill="#b4b0ae"/><rect x="-10" y="430" width="228" height="115" fill="#c0704c"/>
<rect x="20" y="450" width="23" height="72" fill="#d8e8ec"/><rect x="75" y="450" width="23" height="72" fill="#d8e8ec"/><rect x="128" y="450" width="23" height="72" fill="#d8e8ec"/>
<path d="M-10 590V530C20 510 50 540 58 550C80 510 130 510 160 545C190 520 250 525 270 590Z" class="b"/>
<!-- houses -->
<path d="M436 490L492 445L552 485V588H436Z" fill="#fffdf6"/><path d="M432 490L492 445L555 485L548 488L492 465L438 495Z" fill="#5f3d31"/><rect x="436" y="520" width="116" height="18" fill="#5f3d31"/><rect x="505" y="538" width="47" height="50" fill="#6f4a3a"/><rect x="441" y="550" width="40" height="35" fill="#c8dde4" stroke="#555" stroke-width="2"/>
<rect x="553" y="560" width="150" height="90" fill="#dcc698"/><path d="M568 560V525L615 492L665 525V560Z" fill="#fff"/><path d="M565 530L615 490L668 530" stroke="#b74c3c" stroke-width="7" fill="none"/><path d="M635 530L668 508L703 535V610H635Z" fill="#dcc698"/><path d="M632 535L668 508L705 538" stroke="#b74c3c" stroke-width="7" fill="none"/><rect x="590" y="540" width="28" height="20" fill="#5e8ea8"/><rect x="590" y="605" width="28" height="22" fill="#5e8ea8"/>
<rect x="585" y="628" width="155" height="25" fill="#b69a72"/>
<!-- warehouse -->
<rect x="1060" y="620" width="330" height="135" fill="#7a4c38"/><path d="M1045 605L1130 535L1218 610L1300 555L1392 622V640L1300 580L1218 635L1130 565L1048 628Z" fill="#fff"/><path d="M1052 630L1130 565L1215 635V655H1052Z M1222 635L1300 580L1385 640V655H1222Z" fill="#6f4636"/>
<path d="M1060 655H1390L1400 690H1050Z" fill="#737377"/><rect x="1062" y="690" width="22" height="32" fill="#fff"/><rect x="1175" y="690" width="30" height="32" fill="#fff"/><rect x="1235" y="690" width="28" height="32" fill="#fff"/><rect x="1360" y="690" width="22" height="32" fill="#fff"/>
<rect x="1092" y="690" width="75" height="65" fill="#df944f"/><rect x="1270" y="690" width="42" height="65" fill="#df944f"/><rect x="1288" y="605" width="25" height="28" fill="#9db88f"/>
<path d="M1335 782C1340 740 1365 730 1375 735C1390 700 1415 705 1425 735C1445 735 1455 765 1453 782Z" class="b"/>
<!-- trees -->
<g transform="translate(285,393) scale(.7,1.02)"><rect class="d" x="-50" y="40" width="100" height="50" rx="22"/><ellipse class="d" cy="50" rx="50" ry="50"/><path class="tr" d="M0 155V28M0 75L-17 50M0 90L22 60"/></g>
<g transform="translate(553,575) scale(.7,1.4)"><ellipse class="a" cy="18" rx="22" ry="18"/><ellipse class="a" cy="42" rx="38" ry="24"/><ellipse class="a" cy="72" rx="50" ry="28"/><path class="tr" d="M0 120V33M0 75L-17 50M0 90L22 60"/></g>
<g transform="translate(142,955) scale(.65,1.3)"><ellipse class="a" cy="18" rx="22" ry="18"/><ellipse class="a" cy="42" rx="38" ry="24"/><ellipse class="a" cy="72" rx="50" ry="28"/><path class="tr" d="M0 123V33M0 75L-17 50M0 90L22 60"/></g>
<g transform="translate(268,917) scale(.68,1.33)"><ellipse class="a" cy="18" rx="22" ry="18"/><ellipse class="a" cy="42" rx="38" ry="24"/><ellipse class="a" cy="72" rx="50" ry="28"/><path class="tr" d="M0 120V33M0 75L-17 50M0 90L22 60"/></g>
<g transform="translate(208,985) scale(.73,1.05)"><rect class="d" x="-50" y="40" width="100" height="50" rx="22"/><ellipse class="d" cy="50" rx="50" ry="50"/><path class="tr" d="M0 148V28M0 75L-17 50M0 90L22 60"/></g>
<g transform="translate(710,907) scale(.68,1.33)"><ellipse class="a" cy="18" rx="22" ry="18"/><ellipse class="a" cy="42" rx="38" ry="24"/><ellipse class="a" cy="72" rx="50" ry="28"/><path class="tr" d="M0 120V33M0 75L-17 50M0 90L22 60"/></g>
<g transform="translate(650,973) scale(.73,1.05)"><rect class="d" x="-50" y="40" width="100" height="50" rx="22"/><ellipse class="d" cy="50" rx="50" ry="50"/><path class="tr" d="M0 150V28M0 75L-17 50M0 90L22 60"/></g>
<g transform="translate(1435,522) scale(.72,1.08)"><rect class="d" x="-50" y="40" width="100" height="50" rx="22"/><ellipse class="d" cy="50" rx="50" ry="50"/><path class="tr" d="M0 154V28M0 75L-17 50M0 90L22 60"/></g>
<g transform="translate(1497,492) scale(.55,1)"><ellipse class="a" cy="18" rx="22" ry="18"/><ellipse class="a" cy="42" rx="38" ry="24"/><ellipse class="a" cy="72" rx="50" ry="28"/></g>
<g transform="translate(1498,560) scale(.75,1.1)"><rect class="d" x="-50" y="40" width="100" height="50" rx="22"/><ellipse class="d" cy="50" rx="50" ry="50"/><path class="tr" d="M0 148V28M0 75L-17 50M0 90L22 60"/></g>
<g transform="translate(1550,507) scale(.6,1.13)"><rect class="d" x="-50" y="40" width="100" height="50" rx="22"/><ellipse class="d" cy="50" rx="50" ry="50"/><path class="tr" d="M0 155V28"/></g>
<!-- train -->
<rect x="1437" y="785" width="140" height="90" fill="#d9635f"/><rect x="1437" y="868" width="140" height="22" fill="#f0f0f0"/><rect x="1437" y="885" width="140" height="10" fill="#4a5a6a"/><g fill="#3f4f66"><rect x="1453" y="810" width="15" height="32"/><rect x="1475" y="810" width="35" height="32"/><rect x="1520" y="810" width="15" height="32"/><rect x="1545" y="810" width="22" height="32"/></g>
<g transform="translate(1328,807) scale(1.15,1.73)"><rect class="d" x="-50" y="40" width="100" height="50" rx="22"/><ellipse class="d" cy="50" rx="50" ry="50"/><path class="tr" d="M0 146V28M0 85L-17 30M0 100L22 60"/></g>
<g transform="translate(1428,845) scale(1.02,2.1)"><ellipse class="a" cy="18" rx="22" ry="18"/><ellipse class="a" cy="42" rx="38" ry="24"/><ellipse class="a" cy="72" rx="50" ry="28"/><path class="tr" d="M0 124V33M0 85L-17 32M0 100L22 60"/></g>
<g transform="translate(1525,905) scale(1.1,1.75)"><rect class="d" x="-50" y="40" width="100" height="50" rx="22"/><ellipse class="d" cy="50" rx="50" ry="50"/><path class="tr" d="M0 146V28M0 85L-17 30M0 100L22 60"/></g>
<!-- teal trees -->
<g transform="translate(405,605) scale(.73,.73)"><path d="M-8 100L8 100L10 340L32 400H-32L-10 340Z" fill="#8f7048"/><path d="M0 330L-50 250L-60 225M0 300L-75 110M-30 180L-80 120M0 200L85 100M30 150L40 110M0 330L65 230L75 180M50 260L100 245" stroke="#8f7048" stroke-width="9" fill="none"/>
<g class="l"><ellipse cx="-20" cy="25" rx="14" ry="22"/><ellipse cx="-65" cy="65" rx="14" ry="22"/><ellipse cx="-100" cy="90" rx="11" ry="25"/><ellipse cx="30" cy="55" rx="11" ry="25"/><ellipse cx="75" cy="62" rx="21" ry="14"/><ellipse cx="-30" cy="118" rx="17" ry="12"/><ellipse cx="88" cy="130" rx="22" ry="14"/><ellipse cx="-95" cy="155" rx="22" ry="14"/><ellipse cx="-115" cy="205" rx="18" ry="14"/><ellipse cx="-58" cy="205" rx="22" ry="13"/><ellipse cx="55" cy="172" rx="22" ry="14"/><ellipse cx="122" cy="175" rx="22" ry="13"/><ellipse cx="27" cy="222" rx="12" ry="22"/><ellipse cx="100" cy="232" rx="22" ry="14"/><ellipse cx="-85" cy="255" rx="21" ry="17"/><ellipse cx="75" cy="282" rx="22" ry="14"/><ellipse cx="-62" cy="303" rx="17" ry="10"/><ellipse cx="40" cy="297" rx="17" ry="12"/><ellipse cx="-25" cy="240" rx="10" ry="20"/></g></g>
<g transform="translate(878,875) scale(.73,.72)"><path d="M-8 100L8 100L10 340L32 400H-32L-10 340Z" fill="#8f7048"/><path d="M0 330L-50 250L-60 225M0 300L-75 110M-30 180L-80 120M0 200L85 100M30 150L40 110M0 330L65 230L75 180M50 260L100 245" stroke="#8f7048" stroke-width="9" fill="none"/>
<g class="l"><ellipse cx="-20" cy="25" rx="14" ry="22"/><ellipse cx="-65" cy="65" rx="14" ry="22"/><ellipse cx="-100" cy="90" rx="11" ry="25"/><ellipse cx="30" cy="55" rx="11" ry="25"/><ellipse cx="75" cy="62" rx="21" ry="14"/><ellipse cx="-30" cy="118" rx="17" ry="12"/><ellipse cx="88" cy="130" rx="22" ry="14"/><ellipse cx="-95" cy="155" rx="22" ry="14"/><ellipse cx="-115" cy="205" rx="18" ry="14"/><ellipse cx="-58" cy="205" rx="22" ry="13"/><ellipse cx="55" cy="172" rx="22" ry="14"/><ellipse cx="122" cy="175" rx="22" ry="13"/><ellipse cx="27" cy="222" rx="12" ry="22"/><ellipse cx="100" cy="232" rx="22" ry="14"/><ellipse cx="-85" cy="255" rx="21" ry="17"/><ellipse cx="75" cy="282" rx="22" ry="14"/><ellipse cx="-62" cy="303" rx="17" ry="10"/><ellipse cx="40" cy="297" rx="17" ry="12"/><ellipse cx="-25" cy="240" rx="10" ry="20"/></g></g>
<!-- man orange -->
<ellipse cx="341" cy="392" rx="13" ry="18" fill="#d8a580"/><path d="M330 385C332 372 352 375 353 390H340Z" fill="#1d1d1d"/><path d="M318 415L355 415L358 495H318Z" fill="#ee7350"/><path d="M320 495H358L358 590L345 592L335 530L312 595L300 585Z" fill="#9d6b3a"/><path d="M300 590L318 600L310 608H300ZM345 600H365V612H345Z" fill="#a05a28"/>
<!-- couple -->
<ellipse cx="128" cy="580" rx="20" ry="25" fill="#6a6a6a"/><path d="M45 625L68 650L85 610L140 615L165 670L135 690L135 725H80L85 660L68 680L42 650Z" fill="#1fa57c"/><path d="M82 723H135L165 865L145 870L110 775L85 885H66Z" fill="#666"/><path d="M42 890L82 880V905H55ZM135 890L170 862V880L148 895Z" fill="#a5683a"/>
<ellipse cx="200" cy="605" rx="18" ry="30" fill="#c59a5e"/><ellipse cx="192" cy="600" rx="13" ry="22" fill="#e2bb96"/><path d="M182 625L225 625L260 720L235 730L230 775H162L160 680L150 700Z" fill="#459d86"/><path d="M170 775H230L240 870H220L205 800L198 890H170Z" fill="#666"/><rect x="205" y="718" width="30" height="32" fill="#5a4028"/><path d="M162 895L195 885V900H165ZM212 890L242 868L244 880L220 897Z" fill="#333"/>
<!-- yellow coat -->
<ellipse cx="662" cy="618" rx="20" ry="28" fill="#2d2826"/><path d="M645 645L690 640L708 795H637L650 720L635 690L660 680Z" fill="#fdb515"/><rect x="640" y="795" width="65" height="28" fill="#c9b8a6"/><path d="M640 825H660L650 875L615 870ZM690 825H712L718 875H690Z" fill="#a5512e"/>
<!-- dog walker -->
<ellipse cx="510" cy="865" rx="25" ry="35" fill="#cfa878"/><path d="M480 840Q500 825 522 842L515 855H485Z" fill="#f5b52a"/><path d="M520 865L538 900L530 935L510 925Z" fill="#5a5656"/><path d="M485 885L525 890L545 1100L505 1112L468 1080L480 985L440 990L435 980L482 950Z" fill="#8dabc8"/><path d="M468 1090H485V1145H468ZM522 1105H540V1145H522Z" fill="#f5b52a"/><path d="M460 1145H482V1158H460ZM515 1145H537V1158H515Z" fill="#333"/>
<path d="M435 1000L340 1095" stroke="#999" stroke-width="3"/>
<path d="M310 1100L330 1085C355 1095 380 1090 400 1090C405 1120 405 1150 395 1165H375V1150H345L340 1165H322L325 1130Z" fill="#a86f3e"/>
<!-- cows -->
<path d="M835 660L865 645L895 665C950 665 1010 655 1060 660C1070 700 1065 770 1060 840H1022L1020 780C980 780 950 785 920 780L915 840H880V770L860 720L845 712Z" fill="#7d3a18"/><circle cx="825" cy="667" r="9" fill="#5d2a10"/><circle cx="885" cy="663" r="9" fill="#5d2a10"/>
<path d="M790 725H895L908 722L895 775L875 775V842H862L855 790H820L805 842H793Z" fill="#25262a"/>
<!-- cyclist -->
<ellipse cx="1142" cy="880" rx="15" ry="24" fill="#e2c0a0"/><path d="M1128 870C1130 850 1155 850 1157 875L1142 870Z" fill="#4a4a4a"/><path d="M1085 945L1120 905H1165L1190 900V935L1168 985H1120V925Z" fill="#b5bcc8"/><path d="M1115 985H1168L1135 1010V1080H1115L1105 1000Z" fill="#a8b4dc"/>
<ellipse cx="1047" cy="1068" rx="33" ry="40" fill="none" stroke="#9a9a9a" stroke-width="7"/><ellipse cx="1178" cy="1075" rx="33" ry="40" fill="none" stroke="#9a9a9a" stroke-width="7"/><path d="M1047 1068L1080 965M1080 985L1140 1075H1180L1140 1000L1080 985M1140 1075L1085 1010" stroke="#5a3a34" stroke-width="6" fill="none"/><path d="M1070 955H1105" stroke="#b56d34" stroke-width="6"/>
</g>

<!-- water -->
<path d="M0 2435C20 2435 50 2428 75 2438C110 2448 140 2457 172 2459L560 2459C590 2450 610 2436 640 2436C675 2436 695 2455 720 2458L840 2450C850 2440 870 2435 885 2435C920 2435 960 2452 990 2457L1100 2455C1150 2440 1180 2433 1240 2438L1284 2448V2470H0Z" fill="#8be8ff"/>
<path d="M0 2435C50 2440 110 2459 172 2459C240 2459 290 2434 360 2434C430 2434 480 2459 549 2459C610 2459 660 2434 720 2434C790 2434 830 2459 893 2459C950 2459 1000 2434 1056 2434C1120 2434 1200 2450 1284 2464V2730H0Z" fill="#0595cc"/>
<!-- rock -->
<rect x="1139" y="2430" width="4" height="15" fill="#ddd"/><rect x="1149" y="2430" width="4" height="15" fill="#ddd"/>
<path d="M1114 2457C1120 2452 1130 2447 1138 2447C1155 2446 1170 2448 1179 2453C1192 2465 1204 2487 1204 2487C1208 2505 1212 2533 1212 2533C1222 2550 1235 2562 1245 2570C1225 2573 1205 2574 1187 2573L1196 2583H1073L1081 2573C1072 2576 1062 2578 1056 2577C1068 2570 1078 2565 1081 2557C1086 2540 1092 2525 1097 2510C1100 2490 1108 2470 1114 2457Z" fill="url(#rk)"/>
<path d="M1120 2490L1112 2525M1150 2495L1140 2550M1175 2490L1168 2535M1105 2540L1095 2570M1190 2530L1195 2565M1135 2555L1125 2578" stroke="#3f4133" stroke-width="1.500" fill="none"/>
<path d="M1114 2457C1130 2462 1150 2470 1163 2477C1172 2472 1180 2465 1183 2457M1163 2477L1175 2475C1190 2495 1200 2510 1212 2527C1235 2540 1260 2545 1284 2550" stroke="#c69a64" stroke-width="3.500" fill="none"/>
<path d="M1222 2535l-2 14 5 2 2-12zM1246 2545l-1 14 6 1v-12zM1270 2547l-1 12 6 1v-12z" fill="#c69a64"/>
<!-- gull -->
<path d="M1284 2430C1265 2432 1252 2445 1250 2458L1244 2468C1246 2478 1254 2488 1262 2489L1270 2484L1261 2470C1264 2458 1272 2448 1284 2444Z" fill="#fff"/><path d="M1262 2486L1272 2487L1264 2490Z" fill="#1a5a9a"/>
<!-- footer logo -->
<g transform="translate(20,2565)">
<path d="M22 21L36 26L34 23L46 30L32 27L34 29Z M85 21L71 26L73 23L60 30L74 27L72 29Z" fill="#e2b53c"/>
<ellipse cx="53.500" cy="54" rx="33" ry="22" fill="#3aa9c9"/><circle cx="53" cy="35" r="4" fill="#f5a71a"/><rect x="51" y="36" width="4" height="5" fill="#f5a71a"/>
<ellipse cx="53.500" cy="58" rx="25.500" ry="17.500" fill="#f5a71a"/><ellipse cx="40" cy="55" rx="5.500" ry="8" fill="#fff8d8"/><ellipse cx="67" cy="55" rx="5.500" ry="8" fill="#fff8d8"/><ellipse cx="40" cy="55" rx="2.500" ry="4.500" fill="#222"/><ellipse cx="67" cy="55" rx="2.500" ry="4.500" fill="#222"/>
<circle cx="53.500" cy="63" r="3" fill="#e3301c"/><path d="M48 69Q53.500 72 60 69" stroke="#333" stroke-width="1" fill="none"/>
</g>
<g fill="#fff" transform="translate(123,2594)"><rect width="70" height="8"/><rect width="18" height="44"/><rect x="24" width="19" height="44"/><rect x="49" width="21" height="44"/><rect x="79" width="35" height="8"/><rect x="88" width="18" height="44"/><rect x="123" width="17" height="35"/><rect x="147" width="20" height="35"/><rect x="123" y="33" width="44" height="2"/><rect x="131" y="33" width="27" height="11"/></g>
<text transform="translate(310,2626) skewX(-14) scale(1,.88)" font-size="26" font-weight="700" fill="#fff" stroke="#fff" stroke-width=".6" textLength="182" lengthAdjust="spacingAndGlyphs">三重テレビ放送</text>
<text transform="translate(566,2110) skewX(-14) scale(1,.85)" font-size="22" font-weight="700" fill="#0e6bb8" stroke="#0e6bb8" stroke-width=".5" textLength="106" lengthAdjust="spacingAndGlyphs">三重テレビ</text>
<!-- social -->
<rect x="1035" y="2654" width="25" height="26" rx="7" fill="none" stroke="#fff" stroke-width="2"/><circle cx="1047.500" cy="2667" r="6" fill="none" stroke="#fff" stroke-width="2"/><circle cx="1055" cy="2659" r="1.500" fill="#fff"/>
<path d="M1079 2654H1089L1103 2680H1093ZM1083 2656L1094.500 2678H1099L1087.500 2656ZM1099 2654L1089 2665M1080 2680L1088 2670" fill="none" stroke="#fff" stroke-width="1.300"/>
<circle cx="1135.500" cy="2667" r="13.500" fill="#fff"/><path d="M1133 2681V2670H1129V2665H1133V2662C1133 2658 1136 2656 1141 2657V2661C1138 2661 1138 2662 1138 2665H1141L1140.500 2670H1138V2681Z" fill="#0595cc"/>
<circle cx="1178.500" cy="2667" r="13.500" fill="#fff"/><path d="M1180 2659V2671C1180 2675 1174 2675 1174 2671C1174 2668 1177 2668 1178 2668" stroke="#0595cc" stroke-width="2.500" fill="none"/><path d="M1180 2659C1181 2662 1183 2664 1186 2664" stroke="#0595cc" stroke-width="2.500" fill="none"/>
<rect x="1209" y="2655" width="35" height="24" rx="6" fill="#fff"/><path d="M1222 2662L1232 2667L1222 2672Z" fill="#0595cc"/>
<path d="M780 2665L784 2669L780 2673" fill="none" stroke="#fff" stroke-width="2"/>
</svg>

<!-- header -->
<div class="btn" style="left:530px;top:23px;width:128px;height:49px"><span class="t" style="left:54px;top:0">番組表</span><svg class="t" style="left:17px;top:12px" width="28" height="26" viewBox="0 0 28 26"><rect x="2" y="2" width="24" height="17" rx="3" fill="none" stroke="#003f85" stroke-width="3.500"/><path d="M8 22H20V24H8ZM12 19H16V22H12Z" fill="#003f85"/></svg></div>
<div class="btn" style="left:678px;top:23px;width:248px;height:49px"><span class="t" style="left:50px;top:0">公式オンラインショップ</span><svg class="t" style="left:16px;top:9px" width="28" height="30" viewBox="0 0 28 30"><path d="M1 2H5L8 22H23" fill="none" stroke="#003f85" stroke-width="2"/><path d="M7 7H25V18H9Z" fill="#003f85"/><path d="M11 7V18M15 7V18M20 7V18M8 12.500H25" stroke="#fff" stroke-width="1"/><circle cx="11" cy="26" r="1.800" fill="#003f85"/><circle cx="21" cy="26" r="1.800" fill="#003f85"/></svg></div>
<div class="btn" style="left:945px;top:23px;width:318px;height:49px;color:#a2a6ab;font-weight:400"><span class="t" style="left:9px;top:2px">キーワードを入力</span><svg class="t" style="left:283px;top:13px" width="24" height="24" viewBox="0 0 24 24"><circle cx="10" cy="10" r="7.500" fill="none" stroke="#003f85" stroke-width="3.500"/><path d="M15.500 15.500L22 22" stroke="#003f85" stroke-width="3.500"/></svg></div>
<div class="nav" style="left:199px;width:61px">TOP</div><div class="nav" style="left:260px;width:93px">番組紹介</div><div class="nav" style="left:353px;width:92px">ニュース</div><div class="nav" style="left:445px;width:93px">イベント</div><div class="nav" style="left:538px;width:109px">プレゼント</div><div class="nav" style="left:647px;width:125px">アナウンサー</div><div class="nav" style="left:772px;width:142px">第2ch/エムツー</div><div class="nav" style="left:914px;width:77px">アプリ</div><div class="nav" style="left:991px;width:94px;border-right:1px solid #9fb3bf">会社案内</div>

<!-- hero -->
<svg class="t" style="left:295px;top:240px" width="360" height="40"><text x="6" y="31" font-size="36" fill="#003f88" stroke="#003f88" stroke-width=".9" textLength="342" lengthAdjust="spacingAndGlyphs">WEEKLY SCHEDULE</text></svg>
<div class="t" style="left:300px;top:283px;font-size:16px;line-height:24px;color:#003f88;font-weight:500">週間番組表</div>
<div class="t" style="left:20px;top:371px;font-size:13px;line-height:20px;color:#003f88;font-weight:500">HOME<span style="margin:0 7px;font-size:13px">›</span>週間番組表</div>
<div class="t" style="left:20px;top:557px;font-size:30px;line-height:45px;font-weight:700;color:#003f88">週間番組表</div>

<!-- legend -->
<div class="t" style="left:20px;top:643px;box-sizing:border-box;width:140px;height:34px;line-height:32px;text-align:center;border:1px solid #c0c8d0;font-size:15px;color:#444;background:rgba(255,255,255,.45)">アイコンの説明</div>
<div class="ic bl" style="left:175px">字</div><div class="lb" style="left:212px">字幕</div>
<div class="ic bl" style="left:255px">文</div><div class="lb" style="left:292px">文字</div>
<div class="ic bl" style="left:335px">手</div><div class="lb" style="left:372px">手話</div>
<div class="ic bl" style="left:415px">吹</div><div class="lb" style="left:452px">吹替</div>
<div class="ic gr" style="left:495px">二</div><div class="lb" style="left:532px">二か国語</div>
<div class="ic gr" style="left:603px">多</div><div class="lb" style="left:640px">音声多重</div>
<div class="ic rd" style="left:711px">再</div><div class="lb" style="left:748px">再放送</div>
<div class="ic rd" style="left:805px">新</div><div class="lb" style="left:841px">新番組</div>
<div class="ic rd" style="left:899px">終</div><div class="lb" style="left:936px">最終回</div>

<!-- schedule table -->
<div id="tb">
<div class="col" style="left:0;width:35px;border-top:1px solid #c6c9cc"><div style="height:31px;border-bottom:1px solid #c6c9cc"></div><div class="hr" style="height:198px">4</div><div class="hr" style="height:358px">5</div><div class="hr" style="height:100px"></div></div>

<div class="col" style="left:35px;width:137.5px"><div class="h">6月27日（金）</div><div class="c" style="height:131.5px"></div><div class="c" style="height:122px">4:55<br>イイものショッピ<br>ングゥ～！</div><div class="c" style="height:145px">5:25<br>スマイルショッピン<br>グ　日本薬師堂スペ<br>シャル</div><div class="c" style="height:195px">5:55<br>ショップジャパン<p>▽明日を、もっと、<br>ハッピーに！</p></div><div class="c" style="height:60px">6:25</div></div>

<div class="col" style="left:172.5px;width:136px"><div class="h" style="color:#0a5cb5">6月28日（土）</div><div class="c" style="height:31px"></div><div class="c" style="height:100.5px">4:10<br>ダイレクトテレシ<br>ョップ</div><div class="c" style="height:110px">4:40<br>イイものショッピ<br>ングゥ～！</div><div class="c" style="height:127px">5:10<br>ダイレクトテレシ<br>ョップ</div><div class="c" style="height:225px">5:40<br>ビッグフィッシン<br>グ　「兵庫・明石沖<br>でタイラバ満喫」<p>今週は、イチバンエ<br>イトスタッフの森村<br>太一さんと同僚たち<br>が兵庫・明石沖でタ<br>イラバを満喫した様<br>子をお伝えします。</p></div><div class="c" style="height:60px">6:10</div></div>

<div class="col" style="left:308.5px;width:136.5px"><div class="h" style="color:#d0121b">6月29日（日）</div><div class="c" style="height:31px"></div><div class="c" style="height:133.5px">4:28<br>肝心要 からだメン<br>テナンス法！</div><div class="c" style="height:137.5px">4:58<br>ダイレクトテレシ<br>ョップ</div><div class="c" style="height:137.5px">5:28<br>ショップジャパン<p>▽明日を、もっと、<br>ハッピーに！</p></div><div class="c" style="height:116px">5:58<br>天気予報</div><div class="c" style="height:80px">6:00<br>イイものショッピ</div></div>

<div class="col" style="left:445px;width:137px"><div class="h">6月30日（月）</div><div class="c" style="height:253.500px"></div><div class="c" style="height:145px">5:25<br>さようなら！老け<br>印象！若見えスキン<br>ケアでハリと輝き<br>をもう一度！</div><div class="c" style="height:195px">5:55<br>ショップジャパン<p>▽明日を、もっと、<br>ハッピーに！</p></div><div class="c" style="height:60px">6:25</div></div>

<div class="col" style="left:582px;width:136.500px"><div class="h">7月1日（火）</div><div class="c" style="height:131.500px"></div><div class="c" style="height:122px">4:55<br>ソク買い！セレク<br>ション</div><div class="c" style="height:145px">5:25<br>Ｓｈｏｐｐｉｎ’Ｏ<br>ｎ　ショッピン・<br>オン</div><div class="c" style="height:195px">5:55<br>ショップジャパン<p>▽明日を、もっと、<br>ハッピーに！</p></div><div class="c" style="height:60px">6:25</div></div>

<div class="col" style="left:718.500px;width:136.500px"><div class="h">7月2日（水）</div><div class="c" style="height:131.500px"></div><div class="c" style="height:122px">4:55<br>イイものショッピ<br>ングゥ～！</div><div class="c" style="height:145px">5:25<br>イイものショッピ<br>ングゥ～！</div><div class="c" style="height:195px">5:55<br>ショップジャパン<p>▽明日を、もっと、<br>ハッピーに！</p></div><div class="c" style="height:60px">6:25</div></div>

<div class="col" style="left:855px;width:136px"><div class="h">7月3日（木）</div><div class="c" style="height:131.500px"></div><div class="c" style="height:122px">4:55<br>イイものショッピ<br>ングゥ～！</div><div class="c" style="height:145px">5:25<br>いつまでも自分の<br>脚で歩き続ける！<br>秘訣は赤い袋！</div><div class="c" style="height:195px">5:55<br>ショップジャパン<p>▽明日を、もっと、<br>ハッピーに！</p></div><div class="c" style="height:60px">6:25</div></div>

<div class="col" style="left:991px;width:137px"><div class="h">7月4日（金）</div><div class="c" style="height:131.500px"></div><div class="c" style="height:122px">4:55<br>情報ＢＯＸ</div><div class="c" style="height:145px">5:25<br>イイものショッピ<br>ングゥ～！</div><div class="c" style="height:195px">5:55<br>朝一番</div><div class="c" style="height:60px">6:25</div></div>

<div class="col" style="left:1128px;width:36px;border-right:1px solid #c6c9cc;border-top:1px solid #c6c9cc"><div style="height:31px;border-bottom:1px solid #c6c9cc"></div><div class="hr" style="height:198px">4</div><div class="hr" style="height:358px">5</div><div class="hr" style="height:100px"></div></div>
</div>

<!-- footer -->
<div class="fn" style="left:394px;width:133px">防災</div><div class="fn" style="left:527px;width:165px">関連会社</div><div class="fn" style="left:692px;width:197px;border-right:1px solid #cfeaf5">お問い合わせ</div>
<div class="t" style="left:39px;top:2658px;font-size:13px;line-height:20px;letter-spacing:-.12px;color:#cbe9f5">(C)Mie Television Broadcasting Co., Ltd. ALL RIGHTS RESERVED.</div>
<div class="fb" style="left:715px;width:256px"><span class="t" style="left:56px;top:0">公式オンラインショップ</span><svg class="t" style="left:17px;top:10px" width="26" height="28" viewBox="0 0 28 30"><path d="M1 2H5L8 22H23" fill="none" stroke="#2a8fb6" stroke-width="2"/><path d="M7 7H25V18H9Z" fill="#2a8fb6"/><path d="M11 7V18M15 7V18M20 7V18M8 12.500H25" stroke="#fff" stroke-width="1"/><circle cx="11" cy="26" r="1.800" fill="#2a8fb6"/><circle cx="21" cy="26" r="1.800" fill="#2a8fb6"/></svg></div>
<div class="fb" style="left:988px;width:255px"><span class="t" style="left:50px;top:0;font-size:16px;letter-spacing:-.3px">三重テレビアプリ配信中！</span><svg class="t" style="left:10px;top:8px" width="32" height="32" viewBox="0 0 32 32"><rect x=".5" y=".5" width="31" height="31" rx="5" fill="#fff" stroke="#ccc"/><ellipse cx="16" cy="13" rx="12" ry="9" fill="#3aa9c9"/><ellipse cx="16" cy="14" rx="10" ry="7.500" fill="#f5a71a"/><circle cx="11" cy="13" r="1.500" fill="#222"/><circle cx="21" cy="13" r="1.500" fill="#222"/><circle cx="16" cy="17" r="1.500" fill="#e3301c"/><text x="16" y="29" font-size="6" font-weight="700" text-anchor="middle" fill="#d01018">7MTV</text></svg></div>
<div class="t" style="left:795px;top:2656px;font-size:18px;line-height:26px;color:#fff">プライバシーポリシー</div>
</body></html>
